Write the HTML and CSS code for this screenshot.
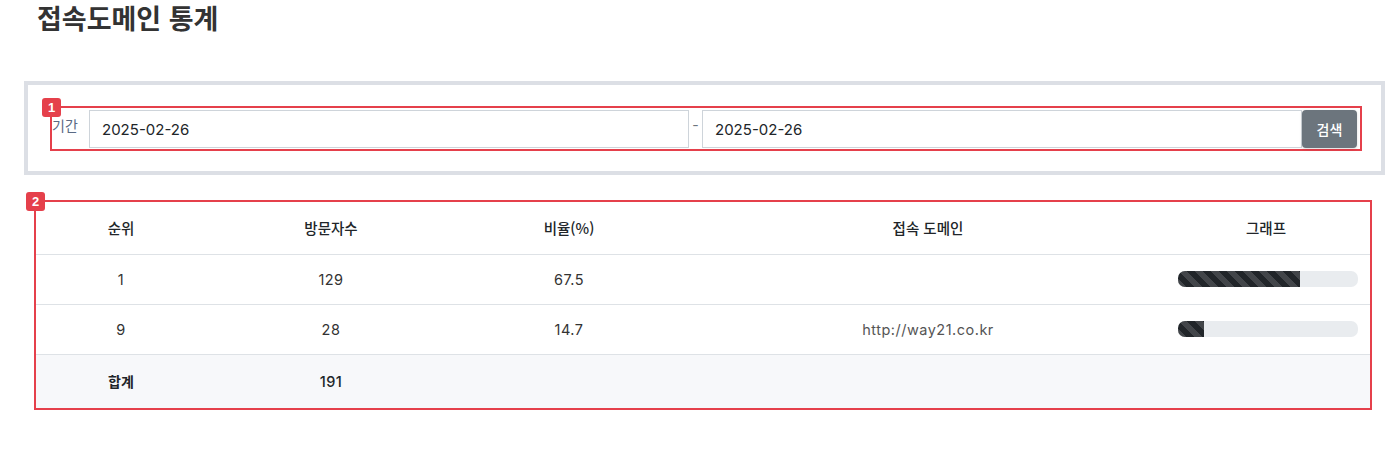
FILE: index.html
```html
<!DOCTYPE html>
<html lang="ko">
<head>
<meta charset="utf-8">
<title>접속도메인 통계</title>
<link rel="stylesheet" href="styles.css">
</head>
<body>
<div class="page">
  <h1 class="title">접속도메인 통계</h1>

  <div class="search-box">
    <div class="mark">
      <span class="badge">1</span>
      <form class="search-row">
        <label class="label">기간</label>
        <input class="date" type="text" value="2025-02-26">
        <span class="dash">-</span>
        <input class="date" type="text" value="2025-02-26">
        <button class="btn" type="button">검색</button>
      </form>
    </div>
  </div>

  <div class="mark table-mark">
    <span class="badge">2</span>
    <table class="stats">
      <colgroup>
        <col class="c1"><col class="c2"><col class="c3"><col class="c4"><col class="c5">
      </colgroup>
      <thead>
        <tr><th>순위</th><th>방문자수</th><th>비율(%)</th><th>접속 도메인</th><th class="graph-head">그래프</th></tr>
      </thead>
      <tbody>
        <tr>
          <td>1</td><td>129</td><td>67.5</td><td class="domain"></td>
          <td class="graph"><div class="bar"><div class="fill" style="width:67.5%"></div></div></td>
        </tr>
        <tr>
          <td>9</td><td>28</td><td>14.7</td><td class="domain">http://way21.co.kr</td>
          <td class="graph"><div class="bar"><div class="fill" style="width:14.7%"></div></div></td>
        </tr>
        <tr class="total">
          <td class="sum-label">합계</td><td class="sum">191</td><td></td><td></td><td></td>
        </tr>
      </tbody>
    </table>
  </div>
</div>
</body>
</html>
```

FILE: styles.css
```css
* { box-sizing: border-box; }
html, body { margin: 0; padding: 0; background: #fff; }
body {
  font-family: "Inter", "Noto Sans CJK KR", sans-serif;
  color: #333;
  font-size: 14px;
}
.page {
  width: 1392px;
  padding: 0 7px 0 24px;
}
.title {
  margin: -3px 0 43px 13px;
  font-family: "Noto Sans CJK KR", sans-serif;
  font-size: 27px;
  line-height: 41px;
  font-weight: 700;
  color: #333;
}
.search-box {
  border: 4px solid #dcdfe5;
  padding: 21px 19px 20px 22px;
  background: #fff;
}
.mark {
  position: relative;
  border: 2px solid #e5404b;
}
.badge {
  position: absolute;
  top: -10px;
  left: -10px;
  width: 19px;
  height: 19px;
  border-radius: 3px;
  background: #e5404b;
  color: #fff;
  font-family: "Liberation Sans", sans-serif;
  font-weight: 700;
  font-size: 13px;
  line-height: 19px;
  text-align: center;
  z-index: 2;
}
.search-row {
  display: flex;
  align-items: flex-start;
  margin: 0;
  padding: 2px 3px 0 0;
  height: 41px;
}
.label {
  font-family: "Noto Sans CJK KR", sans-serif;
  font-size: 14px;
  line-height: 18px;
  color: #5a6a84;
  padding-top: 6px;
  width: 37px;
  flex: none;
}
.date {
  flex: 1;
  min-width: 0;
  height: 38px;
  border: 1px solid #ced4da;
  border-radius: 0;
  padding: 0 12px;
  font-family: "Inter", sans-serif;
  font-size: 15px;
  color: #212529;
  background: #fff;
  outline: none;
}
.dash {
  width: 13px;
  text-align: center;
  color: #6c757d;
  line-height: 30px;
  flex: none;
}
.btn {
  flex: none;
  width: 55px;
  height: 38px;
  border: 0;
  border-radius: 4px;
  background: #6c757d;
  color: #fff;
  font-family: "Noto Sans CJK KR", sans-serif;
  font-size: 14px;
  font-weight: 500;
  box-shadow: 0 1px 3px rgba(0,0,0,0.15);
}
.table-mark {
  margin: 25px 13px 0 10px;
}
.stats {
  width: 100%;
  border-collapse: collapse;
  table-layout: fixed;
}
.c1 { width: 170px; }
.c2 { width: 250px; }
.c3 { width: 226px; }
.c4 { width: 492px; }
.c5 { width: 196px; }
.stats th {
  font-family: "Noto Sans CJK KR", sans-serif;
  font-weight: 500;
  font-size: 14.5px;
  color: #212529;
  height: 52px;
  text-align: center;
  border-bottom: 1px solid #dee2e6;
  padding: 0 8px;
}
.stats th.graph-head { padding: 0 16px 0 4px; }
.stats td {
  height: 50px;
  text-align: center;
  padding: 0 8px;
  border-bottom: 1px solid #dee2e6;
  color: #333;
  font-size: 14.5px;
  letter-spacing: 0.5px;
}
.stats td.domain { color: #555; }
.stats td.graph { padding: 0 12px 0 4px; }
.bar {
  width: 180px;
  height: 16px;
  border-radius: 7px;
  background: #e9ecef;
  overflow: hidden;
  display: flex;
}
.fill {
  height: 100%;
  background-color: #212529;
  background-image: linear-gradient(45deg, rgba(255,255,255,.15) 25%, transparent 25%, transparent 50%, rgba(255,255,255,.15) 50%, rgba(255,255,255,.15) 75%, transparent 75%, transparent);
  background-size: 16px 16px;
}
.stats tr.total td {
  background: #f7f8fa;
  height: 54px;
  border-bottom: 0;
}
.stats td.sum-label {
  font-family: "Noto Sans CJK KR", sans-serif;
  font-weight: 700;
  font-size: 14px;
  letter-spacing: 0;
  color: #212529;
}
.stats td.sum { font-weight: 500; color: #212529; }
```
